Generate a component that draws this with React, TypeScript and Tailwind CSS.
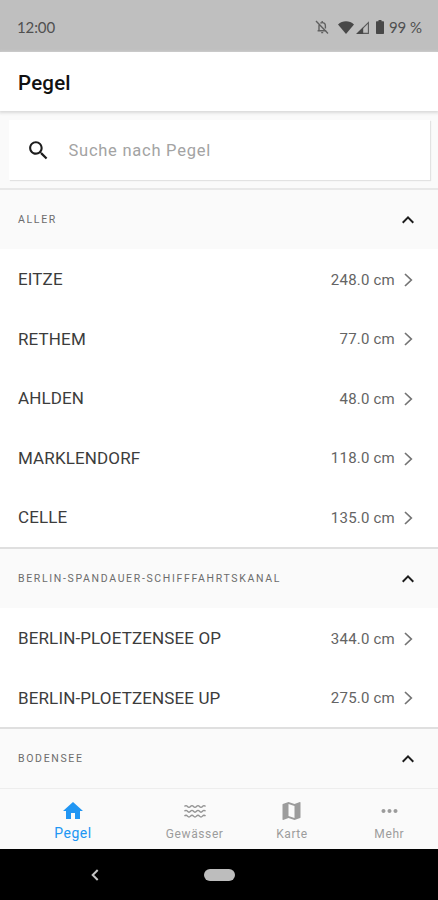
import React, { useState } from 'react';

interface Station {
    name: string;
    level: string;
}

interface River {
    name: string;
    stations: Station[];
}

const RIVERS: River[] = [
    {
        name: 'ALLER',
        stations: [
            { name: 'EITZE', level: '248.0 cm' },
            { name: 'RETHEM', level: '77.0 cm' },
            { name: 'AHLDEN', level: '48.0 cm' },
            { name: 'MARKLENDORF', level: '118.0 cm' },
            { name: 'CELLE', level: '135.0 cm' },
        ],
    },
    {
        name: 'BERLIN-SPANDAUER-SCHIFFFAHRTSKANAL',
        stations: [
            { name: 'BERLIN-PLOETZENSEE OP', level: '344.0 cm' },
            { name: 'BERLIN-PLOETZENSEE UP', level: '275.0 cm' },
        ],
    },
    { name: 'BODENSEE', stations: [] },
];

const Icon: React.FC<{ d: string; className: string }> = ({ d, className }) => (
    <svg viewBox="0 0 24 24" fill="currentColor" className={className}>
        <path d={d} />
    </svg>
);

const StatusBar: React.FC = () => (
    <div className="flex h-[52px] shrink-0 items-center justify-between bg-[#bfbfbf] pt-[2px] pr-[17px] pl-[17px] font-['Lato',sans-serif] text-[15px] text-[#505050]">
        <span className="tracking-[-0.1px]">12:00</span>
        <div className="flex items-center">
            <svg viewBox="0 0 14 14" className="mr-[9px] h-[14px] w-[14px]" fill="none" stroke="#606060" strokeWidth="1.4">
                <path d="M2.6 10.8h8.700M4 10.5V6c0-.6.1-1.100.4-1.600M5.400 3.200C6 2.700 6.500 2.600 7.200 2.600c2 0 3.200 1.500 3.200 3.400v2.600M7.200 1v1.600M6.200 12.600h2M1 1l12 12.400" />
            </svg>
            <svg viewBox="0 0 16 13" className="h-[13px] w-[16px]" fill="#484848">
                <path d="M0 3.400C4.500-.7 11.500-.7 16 3.400L8 13z" />
            </svg>
            <svg viewBox="0 0 13 13" className="ml-[2px] h-[13px] w-[13px]">
                <path d="M1.500 12.400L12.400 1.500v10.900z" fill="none" stroke="#5a5a5a" strokeWidth="1.1" />
                <path d="M.3 13L7.200 6.200V13z" fill="#484848" />
            </svg>
            <svg viewBox="0 0 8 14" className="ml-[7px] h-[14px] w-[8px]" fill="#484848">
                <path d="M2.500 0h3v1.300H7.300q.7 0 .7.700V13.300q0 .7-.7.700H.7Q0 14 0 13.300V2q0-.7.7-.7H2.500z" />
            </svg>
            <span className="ml-[5px] w-[32px] whitespace-nowrap tracking-[-0.1px]">99 %</span>
        </div>
    </div>
);

const SearchField: React.FC = () => {
    const [query, setQuery] = useState('');

    return (
        <div className="shrink-0 px-[9px] pt-[9px] pb-[8px]">
            <label className="flex h-[60px] w-[421px] items-center bg-white pl-[17px] shadow-[1px_1px_1px_#e2e2e2]">
                <Icon
                    className="h-[25px] w-[25px] text-[#1c1c1c]"
                    d="M15.500 14h-.79l-.28-.27C15.410 12.590 16 11.110 16 9.500 16 5.910 13.090 3 9.500 3S3 5.910 3 9.500 5.910 16 9.500 16c1.610 0 3.090-.59 4.230-1.570l.27.28v.79l5 4.990L20.490 19l-4.990-5zm-6 0C7.010 14 5 11.990 5 9.500S7.010 5 9.500 5 14 7.010 14 9.500 11.990 14 9.500 14z"
                />
                <input
                    type="text"
                    value={query}
                    onChange={(e) => setQuery(e.target.value)}
                    placeholder="Suche nach Pegel"
                    className="ml-[17.5px] flex-1 pt-[2px] text-[16.5px] tracking-[0.75px] text-[#222] outline-none placeholder:text-[#a3a3a3]"
                />
            </label>
        </div>
    );
};

const RiverSection: React.FC<{ river: River }> = ({ river }) => (
    <section className="border-t-2 border-[#dfdfdf] first:border-[#e8e8e8]">
        <div className="flex h-[59px] items-center justify-between bg-[#fafafa] pt-px pr-[18px] pl-[18px]">
            <h2 className="text-[10.5px] tracking-[1.67px] text-[#6c6c6c]">{river.name}</h2>
            <Icon className="h-6 w-6 text-[#1c1c1c]" d="M12 8l-6 6 1.410 1.410L12 10.830l4.590 4.580L18 14z" />
        </div>
        {river.stations.map((station) => (
            <div key={station.name} className="flex h-[59.6px] items-center bg-white pt-[2px] pr-[17px] pl-[18px]">
                <span className="flex-1 text-[17px] tracking-[0.13px] text-[#3c3c3c]">{station.name}</span>
                <span className="text-[15px] tracking-[0.22px] text-[#646464]">{station.level}</span>
                <svg viewBox="0 0 26 26" className="h-[26px] w-[26px]" fill="none" stroke="#747474" strokeWidth="1.7">
                    <path d="M10 7l6.300 6-6.300 6" />
                </svg>
            </div>
        ))}
    </section>
);

const BottomTabs: React.FC = () => (
    <nav className="flex h-[61px] shrink-0 border-t border-[#ededed] bg-[#fafafa] text-[12px] text-[#9c9c9c]">
        <div className="flex w-[146px] flex-col items-center pt-[10px] text-[#2196f3]">
            <Icon className="h-[24px] w-[24px]" d="M10 20v-6h4v6h5v-8h3L12 3 2 12h3v8z" />
            <span className="text-[14px] leading-[20px] tracking-[0.55px]">Pegel</span>
        </div>
        <div className="flex flex-1 flex-col items-center pt-[10px]">
            <svg viewBox="0 0 24 24" className="h-[24px] w-[24px]" fill="none" stroke="#949494" strokeWidth="1.400">
                <path d="M1.500 7.500q1.500-1.800 3 0t3 0 3 0 3 0 3 0 3 0 3 0M1.500 12.300q1.500-1.800 3 0t3 0 3 0 3 0 3 0 3 0 3 0M1.500 17.100q1.500-1.800 3 0t3 0 3 0 3 0 3 0 3 0 3 0" />
            </svg>
            <span className="leading-[22px] tracking-[0.6px]">Gewässer</span>
        </div>
        <div className="flex flex-1 flex-col items-center pt-[10px]">
            <Icon
                className="h-[24px] w-[25px]"
                d="M20.500 3l-.16.030L15 5.100 9 3 3.360 4.900c-.21.070-.36.250-.36.480V20.500c0 .28.220.5.500.5l.16-.030L9 18.900l6 2.100 5.640-1.900c.21-.070.36-.25.360-.48V3.500c0-.28-.22-.5-.5-.5zM15 19l-6-2.110V5l6 2.110V19z"
            />
            <span className="leading-[22px] tracking-[0.6px]">Karte</span>
        </div>
        <div className="flex flex-1 flex-col items-center pt-[10px]">
            <Icon
                className="h-[24px] w-[25px]"
                d="M6 10c-1.100 0-2 .9-2 2s.9 2 2 2 2-.9 2-2-.9-2-2-2zm12 0c-1.100 0-2 .9-2 2s.9 2 2 2 2-.9 2-2-.9-2-2-2zm-6 0c-1.100 0-2 .9-2 2s.9 2 2 2 2-.9 2-2-.9-2-2-2z"
            />
            <span className="leading-[22px] tracking-[0.6px]">Mehr</span>
        </div>
    </nav>
);

const SystemNav: React.FC = () => (
    <div className="grid h-[51px] shrink-0 grid-cols-[190px_58px_190px] items-center justify-items-center bg-black">
        <svg viewBox="0 0 8 12" className="h-[12px] w-[8px]" fill="none" stroke="#c4c4c4" strokeWidth="2">
            <path d="M6.700 1L1.700 6l5 5" />
        </svg>
        <div className="h-[12px] w-[31px] rounded-full bg-[#bdbdbd]"></div>
    </div>
);

const App: React.FC = () => (
    <div className="flex h-[900px] w-[438px] flex-col overflow-hidden bg-[#fafafa] font-['Roboto',sans-serif]">
        <StatusBar />
        <header className="z-10 flex h-[59px] shrink-0 items-center bg-white pt-[4px] pl-[18px] shadow-[0_1px_3px_1px_#d9d9d9]">
            <h1 className="text-[20.5px] font-medium tracking-[0.2px] text-[#111]">Pegel</h1>
        </header>
        <SearchField />
        <main className="min-h-0 flex-1 overflow-hidden">
            {RIVERS.map((river) => (
                <RiverSection key={river.name} river={river} />
            ))}
        </main>
        <BottomTabs />
        <SystemNav />
    </div>
);

export default App;
